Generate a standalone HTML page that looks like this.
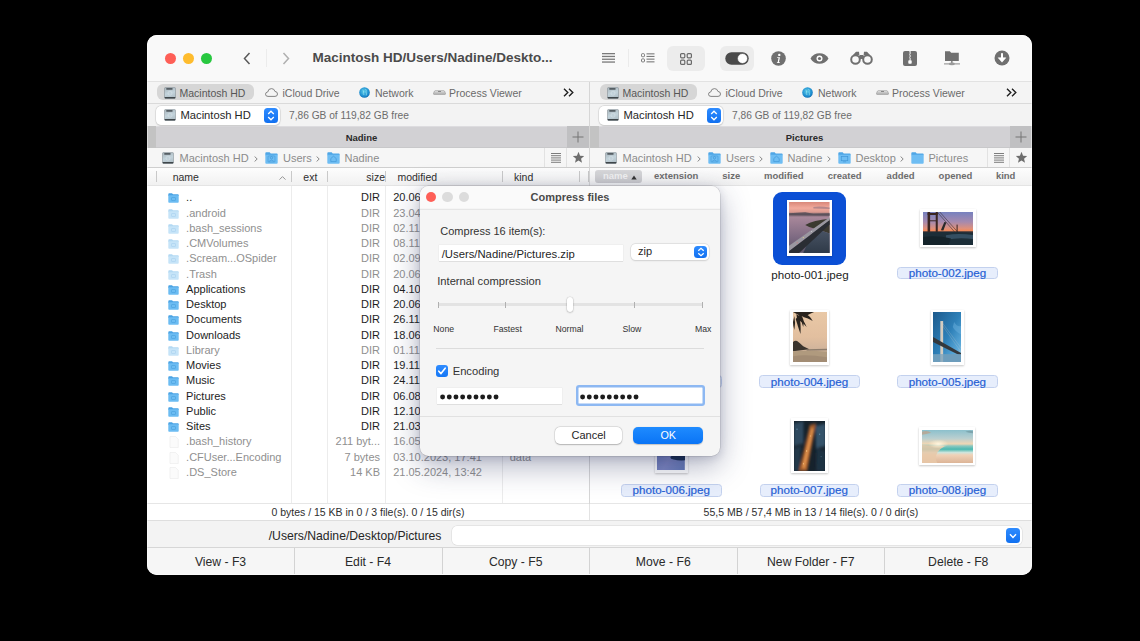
<!DOCTYPE html>
<html><head><meta charset="utf-8">
<style>
*{box-sizing:border-box;margin:0;padding:0}
html,body{width:1140px;height:641px;overflow:hidden;background:#000;font-family:"Liberation Sans",sans-serif;color:#222}
.a{position:absolute}
#win{position:absolute;left:147px;top:35px;width:885px;height:540px;border-radius:10px;background:#f9f9f9;overflow:hidden}
.t{position:absolute;white-space:nowrap;line-height:1}
.hl{position:absolute;height:1px;background:#dcdcdc}
.vl{position:absolute;width:1px;background:#e3e3e3}
</style></head><body>
<div id="win">


  <div class="a" style="left:0;top:0;width:885px;height:46px;background:#f9f9f9"></div>
  <div class="hl" style="left:0;top:46px;width:885px;background:#e2e2e2"></div>
  <div class="a" style="left:18px;top:17.7px;width:11px;height:11px;border-radius:50%;background:#fe5f57"></div>
  <div class="a" style="left:35.9px;top:17.7px;width:11px;height:11px;border-radius:50%;background:#febc2e"></div>
  <div class="a" style="left:53.9px;top:17.7px;width:11px;height:11px;border-radius:50%;background:#28c840"></div>
  <div class="a" style="left:0;top:47px;width:885px;height:22px;background:#f4f4f4"></div>
  <div class="hl" style="left:0;top:68px;width:885px;background:#dadada"></div>
  <div class="a" style="left:0;top:69px;width:885px;height:22px;background:#f3f3f3"></div>
  <div class="a" style="left:0;top:91px;width:885px;height:22px;background:#d2d1d4"></div>
  <div class="hl" style="left:0;top:91px;width:885px;background:#dddcdf"></div>
  <div class="hl" style="left:0;top:112px;width:885px;background:#c8c8ca"></div>
  <div class="a" style="left:0;top:113px;width:885px;height:19px;background:#f6f6f6"></div>
  <div class="hl" style="left:0;top:132px;width:885px;background:#cfcfcf"></div>
  <div class="a" style="left:0;top:133px;width:885px;height:17px;background:linear-gradient(#fdfdfd,#f1f1f1)"></div>
  <div class="hl" style="left:0;top:150px;width:885px;background:#e4e4e4"></div>
  <div class="a" style="left:0;top:151px;width:885px;height:317px;background:#fff"></div>
  <div class="hl" style="left:0;top:468px;width:885px;background:#e6e6e6"></div>
  <div class="a" style="left:0;top:469px;width:885px;height:16px;background:#fff"></div>
  <div class="hl" style="left:0;top:485px;width:885px;background:#dedede"></div>
  <div class="a" style="left:0;top:486px;width:885px;height:27px;background:#f3f3f3"></div>
  <div class="hl" style="left:0;top:512px;width:885px;background:#d6d6d6"></div>
  <div class="a" style="left:0;top:513px;width:885px;height:27px;background:#f6f6f6"></div>
  <div class="vl" style="left:442px;top:47px;height:438px;background:#d6d6d6"></div>

  <!-- nav -->
  <svg class="a" style="left:96px;top:17px" width="8" height="13" viewBox="0 0 8 13"><path d="M6.5 1 L1.5 6.5 L6.5 12" fill="none" stroke="#5a5a5a" stroke-width="1.5"/></svg>
  <div class="a" style="left:119px;top:14px;width:1px;height:18px;background:#ececec"></div>
  <svg class="a" style="left:135px;top:17px" width="8" height="13" viewBox="0 0 8 13"><path d="M1.5 1 L6.5 6.5 L1.5 12" fill="none" stroke="#b0b0b0" stroke-width="1.5"/></svg>
  <div class="t" style="left:165.5px;top:16px;font-size:13.5px;font-weight:bold;color:#4b4b4b">Macintosh HD/Users/Nadine/Deskto...</div>
  <!-- view icons -->
  <svg class="a" style="left:455px;top:18px" width="13" height="10" viewBox="0 0 13 10"><g fill="#7a7a7a"><rect x="0" y="0" width="13" height="1.3"/><rect x="0" y="2.8" width="13" height="1.3"/><rect x="0" y="5.6" width="13" height="1.3"/><rect x="0" y="8.4" width="13" height="1.3"/></g></svg>
  <div class="a" style="left:480.5px;top:14px;width:1px;height:18px;background:#ebebeb"></div>
  <svg class="a" style="left:494px;top:18px" width="14" height="10" viewBox="0 0 14 10"><g fill="none" stroke="#7a7a7a" stroke-width="1"><rect x="0.5" y="0.7" width="3" height="3" rx="0.8"/><rect x="0.5" y="5.9" width="3" height="3" rx="0.8"/></g><g fill="#7a7a7a"><rect x="5.5" y="0.3" width="8" height="1.1"/><rect x="5.5" y="2.9" width="8" height="1.1"/><rect x="5.5" y="5.6" width="8" height="1.1"/><rect x="5.5" y="8.3" width="8" height="1.1"/></g></svg>
  <div class="a" style="left:520px;top:11px;width:38px;height:25px;border-radius:6px;background:#ececec"></div>
  <svg class="a" style="left:533px;top:17.5px" width="12" height="12" viewBox="0 0 12 12"><g fill="none" stroke="#6a6a6a" stroke-width="1.2"><rect x="0.6" y="0.6" width="4.2" height="4.2" rx="1"/><rect x="7.2" y="0.6" width="4.2" height="4.2" rx="1"/><rect x="0.6" y="7.2" width="4.2" height="4.2" rx="1"/><rect x="7.2" y="7.2" width="4.2" height="4.2" rx="1"/></g></svg>
  <div class="a" style="left:573px;top:11px;width:34px;height:25px;border-radius:6px;background:#ececec"></div>
<svg class="a" style="left:578px;top:16.6px" width="24" height="13" viewBox="0 0 24 13"><rect x="0.3" y="0.3" width="23.4" height="12.4" rx="6.2" fill="#4a4a4a"/><circle cx="17.5" cy="6.5" r="5" fill="#fff" stroke="#4a4a4a" stroke-width="0.6"/></svg>
  <svg class="a" style="left:624px;top:16px" width="15" height="15" viewBox="0 0 15 15"><circle cx="7.5" cy="7.5" r="7.3" fill="#707070"/><circle cx="8.3" cy="3.9" r="1.2" fill="#fff"/><path d="M6.2 6.2 L9 6.2 L7.9 11.3 L9 11.3 L8.8 12 L5.8 12 L6 11.3 L6.7 11.3 L7.5 7 L6.1 7 Z" fill="#fff"/></svg>
  <!-- eye -->
  <svg class="a" style="left:663px;top:18px" width="19" height="11" viewBox="0 0 19 11"><path d="M0.5 5.5 C4 -1.5 15 -1.5 18.5 5.5 C15 12.5 4 12.5 0.5 5.5 Z" fill="#707070"/><circle cx="9.5" cy="5.5" r="3" fill="#fff"/><circle cx="9.5" cy="5.5" r="1.6" fill="#707070"/></svg>
  <!-- binoculars -->
  <svg class="a" style="left:702.5px;top:16px" width="23" height="14" viewBox="0 0 23 14"><g fill="none" stroke="#707070" stroke-width="2"><circle cx="5.5" cy="8.5" r="4.3"/><circle cx="17.5" cy="8.5" r="4.3"/></g><path d="M3 4 L6 0.8 L9 0.8 L9.5 5 L13.5 5 L14 0.8 L17 0.8 L20 4 Z" fill="#707070"/><rect x="9" y="5" width="5" height="3" fill="#707070"/></svg>
  <!-- zip -->
  <svg class="a" style="left:756px;top:15.5px" width="14" height="15" viewBox="0 0 14 15"><rect x="0" y="0" width="14" height="15" rx="2" fill="#707070"/><rect x="6.3" y="0" width="1.4" height="9.5" fill="#e8e8e8"/><g fill="#707070"><rect x="6.3" y="1.5" width="0.7" height="1"/><rect x="7" y="3" width="0.7" height="1"/><rect x="6.3" y="4.5" width="0.7" height="1"/><rect x="7" y="6" width="0.7" height="1"/><rect x="6.3" y="7.5" width="0.7" height="1"/></g><rect x="5.3" y="9.3" width="3.4" height="3.5" rx="0.8" fill="#fff"/></svg>
  <!-- network folder -->
  <svg class="a" style="left:796.5px;top:15px" width="16" height="17" viewBox="0 0 16 17"><path d="M1 1.3 L5.8 1.3 L7.2 2.8 L14.8 2.8 L14.8 10.9 L1 10.9 Z" fill="#707070"/><rect x="7.2" y="10.9" width="1.3" height="2.4" fill="#707070"/><rect x="0" y="13.4" width="16" height="1" fill="#8a8a8a"/><ellipse cx="7.9" cy="13.9" rx="3" ry="1.3" fill="#9a9a9a"/></svg>
  <!-- download -->
  <svg class="a" style="left:847px;top:15.3px" width="16" height="16" viewBox="0 0 16 16"><circle cx="8" cy="8" r="7.5" fill="#707070"/><rect x="7" y="3.2" width="2" height="5.5" fill="#fff"/><path d="M4.2 7.8 L11.8 7.8 L8 12.2 Z" fill="#fff" stroke="#fff" stroke-width="0.6" stroke-linejoin="round"/></svg>

<div class="a" style="left:10px;top:49px;width:97px;height:16px;background:#d6d6d6;border-radius:6px"></div>
<svg class="a" style="left:17px;top:51.5px" width="12" height="12" viewBox="0 0 12 12"><defs><linearGradient id="dg1" x1="0" y1="0" x2="0.3" y2="1"><stop offset="0" stop-color="#a9b6bd"/><stop offset="0.6" stop-color="#c3d3db"/><stop offset="1" stop-color="#b3c2ca"/></linearGradient></defs><path d="M1.3 0.6 H10.7 Q11.5 0.6 11.5 1.5 V10.2 Q11.5 11.4 10.3 11.4 H1.7 Q0.5 11.4 0.5 10.2 V1.5 Q0.5 0.6 1.3 0.6 Z" fill="url(#dg1)" stroke="#7d878c" stroke-width="0.5"/><rect x="2.3" y="1.1" width="6.2" height="1.6" fill="#4d555a"/><rect x="0.6" y="10" width="10.8" height="1.4" rx="0.6" fill="#3f464a"/><circle cx="6" cy="6.2" r="2" fill="none" stroke="#e3ecf0" stroke-width="0.5" opacity="0.8"/></svg>
<div class="t" style="left:32.5px;top:52.5px;font-size:10.5px;color:#565656;">Macintosh HD</div>
<svg class="a" style="left:118px;top:52.5px" width="13" height="9" viewBox="0 0 13 9"><path d="M3 8.4 Q0.5 8.4 0.5 6.2 Q0.5 4.2 2.7 4 Q3.2 0.6 6.5 0.6 Q9.3 0.6 9.9 3.4 Q12.5 3.6 12.5 6 Q12.5 8.4 10 8.4 Z" fill="none" stroke="#777" stroke-width="0.9"/></svg>
<div class="t" style="left:135.5px;top:52.5px;font-size:10.5px;color:#6a6a6a;">iCloud Drive</div>
<svg class="a" style="left:212px;top:51.5px" width="11" height="11" viewBox="0 0 11 11"><defs><radialGradient id="gl0" cx="0.45" cy="0.4" r="0.65"><stop offset="0" stop-color="#5ccbe8"/><stop offset="0.7" stop-color="#1d8ed0"/><stop offset="1" stop-color="#1366a8"/></radialGradient></defs><circle cx="5.5" cy="5.5" r="5.3" fill="url(#gl0)"/><path d="M3.5 3 Q5 3.5 4.5 5 Q3.8 6.5 5 8 M6.5 2 Q7.8 3.3 7 5 Q8 6.5 7.2 8.5" fill="none" stroke="#a8ecf5" stroke-width="0.9" opacity="0.6"/></svg>
<div class="t" style="left:228px;top:52.5px;font-size:10.5px;color:#6a6a6a;">Network</div>
<svg class="a" style="left:285.5px;top:54.5px" width="13" height="5" viewBox="0 0 13 5"><defs><linearGradient id="pv0" x1="0" y1="0" x2="0" y2="1"><stop offset="0" stop-color="#e4e4e4"/><stop offset="1" stop-color="#a8a8a8"/></linearGradient></defs><path d="M1.5 1 Q2 0.4 3 0.4 H10 Q11 0.4 11.5 1 L12.6 3.4 Q12.6 4.6 11.4 4.6 H1.6 Q0.4 4.6 0.4 3.4 Z" fill="url(#pv0)" stroke="#8c8c8c" stroke-width="0.5"/><rect x="5" y="1.2" width="3" height="0.6" fill="#555"/></svg>
<div class="t" style="left:302px;top:52.5px;font-size:10.5px;color:#6a6a6a;">Process Viewer</div>
<svg class="a" style="left:415.7px;top:53px" width="11" height="9" viewBox="0 0 11 9"><path d="M1 0.8 L4.8 4.5 L1 8.2 M6 0.8 L9.8 4.5 L6 8.2" fill="none" stroke="#222" stroke-width="1.4"/></svg>
<div class="a" style="left:9px;top:71px;width:124px;height:18.5px;background:#fff;border-radius:5px;box-shadow:0 0 0 0.5px #d0d0d0,0 0.5px 1.5px rgba(0,0,0,0.18)"></div>
<svg class="a" style="left:17px;top:74px" width="12" height="12" viewBox="0 0 12 12"><defs><linearGradient id="dg2" x1="0" y1="0" x2="0.3" y2="1"><stop offset="0" stop-color="#a9b6bd"/><stop offset="0.6" stop-color="#c3d3db"/><stop offset="1" stop-color="#b3c2ca"/></linearGradient></defs><path d="M1.3 0.6 H10.7 Q11.5 0.6 11.5 1.5 V10.2 Q11.5 11.4 10.3 11.4 H1.7 Q0.5 11.4 0.5 10.2 V1.5 Q0.5 0.6 1.3 0.6 Z" fill="url(#dg2)" stroke="#7d878c" stroke-width="0.5"/><rect x="2.3" y="1.1" width="6.2" height="1.6" fill="#4d555a"/><rect x="0.6" y="10" width="10.8" height="1.4" rx="0.6" fill="#3f464a"/><circle cx="6" cy="6.2" r="2" fill="none" stroke="#e3ecf0" stroke-width="0.5" opacity="0.8"/></svg>
<div class="t" style="left:33.5px;top:75px;font-size:11.2px;color:#262626;">Macintosh HD</div>
<div class="a" style="left:117px;top:73px;width:14px;height:14.5px;border-radius:3.5px;background:linear-gradient(#2f8cff,#1170f0)"></div>
<svg class="a" style="left:120px;top:75px" width="8" height="11" viewBox="0 0 8 11"><path d="M1.2 4 L4 1.2 L6.8 4 M1.2 7 L4 9.8 L6.8 7" fill="none" stroke="#fff" stroke-width="1.3"/></svg>
<div class="t" style="left:142px;top:75.5px;font-size:10.2px;color:#6c6c6c;">7,86 GB of 119,82 GB free</div>
<div class="a" style="left:0px;top:91px;width:9px;height:22px;background:#c3c3c3;"></div>
<div class="a" style="left:419.5px;top:91px;width:22.5px;height:22px;background:#c0c0c2;"></div>
<svg class="a" style="left:425px;top:96px" width="12" height="12" viewBox="0 0 12 12"><path d="M6 0.5 V11.5 M0.5 6 H11.5" stroke="#747474" stroke-width="1"/></svg>
<div class="t" style="left:9px;width:411px;text-align:center;top:97.5px;font-size:9.5px;font-weight:bold;color:#2a2a2a">Nadine</div>
<div class="a" style="left:396.6px;top:113px;width:1px;height:19px;background:#e2e2e2;"></div>
<div class="a" style="left:419.3px;top:113px;width:1px;height:19px;background:#e2e2e2;"></div>
<svg class="a" style="left:404px;top:117.5px" width="10" height="10" viewBox="0 0 10 10"><g fill="#7c7c7c"><rect y="0" width="10" height="1"/><rect y="2.2" width="10" height="1"/><rect y="4.4" width="10" height="1"/><rect y="6.6" width="10" height="1"/><rect y="8.8" width="10" height="1"/></g></svg>
<svg class="a" style="left:424.5px;top:116px" width="13" height="13" viewBox="0 0 24 24"><path d="M12 1.5 L14.9 8.6 L22.5 9.2 L16.7 14.1 L18.5 21.6 L12 17.6 L5.5 21.6 L7.3 14.1 L1.5 9.2 L9.1 8.6 Z" fill="#6e6e6e"/></svg>
<svg class="a" style="left:15px;top:116.5px" width="12" height="12" viewBox="0 0 12 12"><defs><linearGradient id="dg3" x1="0" y1="0" x2="0.3" y2="1"><stop offset="0" stop-color="#a9b6bd"/><stop offset="0.6" stop-color="#c3d3db"/><stop offset="1" stop-color="#b3c2ca"/></linearGradient></defs><path d="M1.3 0.6 H10.7 Q11.5 0.6 11.5 1.5 V10.2 Q11.5 11.4 10.3 11.4 H1.7 Q0.5 11.4 0.5 10.2 V1.5 Q0.5 0.6 1.3 0.6 Z" fill="url(#dg3)" stroke="#7d878c" stroke-width="0.5"/><rect x="2.3" y="1.1" width="6.2" height="1.6" fill="#4d555a"/><rect x="0.6" y="10" width="10.8" height="1.4" rx="0.6" fill="#3f464a"/><circle cx="6" cy="6.2" r="2" fill="none" stroke="#e3ecf0" stroke-width="0.5" opacity="0.8"/></svg>
<div class="t" style="left:32.5px;top:117.5px;font-size:11px;color:#8b8b8b;">Macintosh HD</div>
<svg class="a" style="left:107.0px;top:121px" width="4" height="6" viewBox="0 0 4 6"><path d="M0.6 0.5 L3.2 3 L0.6 5.5" fill="none" stroke="#7a7a7a" stroke-width="0.9"/></svg>
<svg class="a" style="left:118.0px;top:117px" width="13" height="12" viewBox="0 0 12 11"><path d="M0.3 1.2 Q0.3 0.3 1.2 0.3 L4.3 0.3 L5.3 1.3 L10.8 1.3 Q11.7 1.3 11.7 2.2 L11.7 3 L0.3 3 Z" fill="#4fa6e6"/><rect x="0.3" y="2.4" width="11.4" height="8.3" rx="0.9" fill="#6ebdf3"/><circle cx="6" cy="5.3" r="1.1" fill="none" stroke="#3f95d6" stroke-width="0.6"/><path d="M3.8 8.6 Q6 6.3 8.2 8.6" fill="none" stroke="#3f95d6" stroke-width="0.6"/><rect x="2.8" y="3.6" width="6.4" height="5.6" rx="0.8" fill="none" stroke="#3f95d6" stroke-width="0.5"/></svg>
<div class="t" style="left:136.0px;top:117.5px;font-size:11px;color:#8b8b8b;">Users</div>
<svg class="a" style="left:168.5px;top:121px" width="4" height="6" viewBox="0 0 4 6"><path d="M0.6 0.5 L3.2 3 L0.6 5.5" fill="none" stroke="#7a7a7a" stroke-width="0.9"/></svg>
<svg class="a" style="left:179.5px;top:117px" width="13" height="12" viewBox="0 0 12 11"><path d="M0.3 1.2 Q0.3 0.3 1.2 0.3 L4.3 0.3 L5.3 1.3 L10.8 1.3 Q11.7 1.3 11.7 2.2 L11.7 3 L0.3 3 Z" fill="#4fa6e6"/><rect x="0.3" y="2.4" width="11.4" height="8.3" rx="0.9" fill="#6ebdf3"/><path d="M3.5 6 L6 3.8 L8.5 6 V8.8 H3.5 Z" fill="none" stroke="#3f95d6" stroke-width="0.6"/></svg>
<div class="t" style="left:197.5px;top:117.5px;font-size:11px;color:#8b8b8b;">Nadine</div>
<div class="a" style="left:453px;top:49px;width:97px;height:16px;background:#d6d6d6;border-radius:6px"></div>
<svg class="a" style="left:460px;top:51.5px" width="12" height="12" viewBox="0 0 12 12"><defs><linearGradient id="dg4" x1="0" y1="0" x2="0.3" y2="1"><stop offset="0" stop-color="#a9b6bd"/><stop offset="0.6" stop-color="#c3d3db"/><stop offset="1" stop-color="#b3c2ca"/></linearGradient></defs><path d="M1.3 0.6 H10.7 Q11.5 0.6 11.5 1.5 V10.2 Q11.5 11.4 10.3 11.4 H1.7 Q0.5 11.4 0.5 10.2 V1.5 Q0.5 0.6 1.3 0.6 Z" fill="url(#dg4)" stroke="#7d878c" stroke-width="0.5"/><rect x="2.3" y="1.1" width="6.2" height="1.6" fill="#4d555a"/><rect x="0.6" y="10" width="10.8" height="1.4" rx="0.6" fill="#3f464a"/><circle cx="6" cy="6.2" r="2" fill="none" stroke="#e3ecf0" stroke-width="0.5" opacity="0.8"/></svg>
<div class="t" style="left:475.5px;top:52.5px;font-size:10.5px;color:#565656;">Macintosh HD</div>
<svg class="a" style="left:561px;top:52.5px" width="13" height="9" viewBox="0 0 13 9"><path d="M3 8.4 Q0.5 8.4 0.5 6.2 Q0.5 4.2 2.7 4 Q3.2 0.6 6.5 0.6 Q9.3 0.6 9.9 3.4 Q12.5 3.6 12.5 6 Q12.5 8.4 10 8.4 Z" fill="none" stroke="#777" stroke-width="0.9"/></svg>
<div class="t" style="left:578.5px;top:52.5px;font-size:10.5px;color:#6a6a6a;">iCloud Drive</div>
<svg class="a" style="left:655px;top:51.5px" width="11" height="11" viewBox="0 0 11 11"><defs><radialGradient id="gl443" cx="0.45" cy="0.4" r="0.65"><stop offset="0" stop-color="#5ccbe8"/><stop offset="0.7" stop-color="#1d8ed0"/><stop offset="1" stop-color="#1366a8"/></radialGradient></defs><circle cx="5.5" cy="5.5" r="5.3" fill="url(#gl443)"/><path d="M3.5 3 Q5 3.5 4.5 5 Q3.8 6.5 5 8 M6.5 2 Q7.8 3.3 7 5 Q8 6.5 7.2 8.5" fill="none" stroke="#a8ecf5" stroke-width="0.9" opacity="0.6"/></svg>
<div class="t" style="left:671px;top:52.5px;font-size:10.5px;color:#6a6a6a;">Network</div>
<svg class="a" style="left:728.5px;top:54.5px" width="13" height="5" viewBox="0 0 13 5"><defs><linearGradient id="pv443" x1="0" y1="0" x2="0" y2="1"><stop offset="0" stop-color="#e4e4e4"/><stop offset="1" stop-color="#a8a8a8"/></linearGradient></defs><path d="M1.5 1 Q2 0.4 3 0.4 H10 Q11 0.4 11.5 1 L12.6 3.4 Q12.6 4.6 11.4 4.6 H1.6 Q0.4 4.6 0.4 3.4 Z" fill="url(#pv443)" stroke="#8c8c8c" stroke-width="0.5"/><rect x="5" y="1.2" width="3" height="0.6" fill="#555"/></svg>
<div class="t" style="left:745px;top:52.5px;font-size:10.5px;color:#6a6a6a;">Process Viewer</div>
<svg class="a" style="left:858.7px;top:53px" width="11" height="9" viewBox="0 0 11 9"><path d="M1 0.8 L4.8 4.5 L1 8.2 M6 0.8 L9.8 4.5 L6 8.2" fill="none" stroke="#222" stroke-width="1.4"/></svg>
<div class="a" style="left:452px;top:71px;width:124px;height:18.5px;background:#fff;border-radius:5px;box-shadow:0 0 0 0.5px #d0d0d0,0 0.5px 1.5px rgba(0,0,0,0.18)"></div>
<svg class="a" style="left:460px;top:74px" width="12" height="12" viewBox="0 0 12 12"><defs><linearGradient id="dg5" x1="0" y1="0" x2="0.3" y2="1"><stop offset="0" stop-color="#a9b6bd"/><stop offset="0.6" stop-color="#c3d3db"/><stop offset="1" stop-color="#b3c2ca"/></linearGradient></defs><path d="M1.3 0.6 H10.7 Q11.5 0.6 11.5 1.5 V10.2 Q11.5 11.4 10.3 11.4 H1.7 Q0.5 11.4 0.5 10.2 V1.5 Q0.5 0.6 1.3 0.6 Z" fill="url(#dg5)" stroke="#7d878c" stroke-width="0.5"/><rect x="2.3" y="1.1" width="6.2" height="1.6" fill="#4d555a"/><rect x="0.6" y="10" width="10.8" height="1.4" rx="0.6" fill="#3f464a"/><circle cx="6" cy="6.2" r="2" fill="none" stroke="#e3ecf0" stroke-width="0.5" opacity="0.8"/></svg>
<div class="t" style="left:476.5px;top:75px;font-size:11.2px;color:#262626;">Macintosh HD</div>
<div class="a" style="left:560px;top:73px;width:14px;height:14.5px;border-radius:3.5px;background:linear-gradient(#2f8cff,#1170f0)"></div>
<svg class="a" style="left:563px;top:75px" width="8" height="11" viewBox="0 0 8 11"><path d="M1.2 4 L4 1.2 L6.8 4 M1.2 7 L4 9.8 L6.8 7" fill="none" stroke="#fff" stroke-width="1.3"/></svg>
<div class="t" style="left:585px;top:75.5px;font-size:10.2px;color:#6c6c6c;">7,86 GB of 119,82 GB free</div>
<div class="a" style="left:443px;top:91px;width:9px;height:22px;background:#c3c3c3;"></div>
<div class="a" style="left:862.5px;top:91px;width:22.5px;height:22px;background:#c0c0c2;"></div>
<svg class="a" style="left:868px;top:96px" width="12" height="12" viewBox="0 0 12 12"><path d="M6 0.5 V11.5 M0.5 6 H11.5" stroke="#747474" stroke-width="1"/></svg>
<div class="t" style="left:452px;width:411px;text-align:center;top:97.5px;font-size:9.5px;font-weight:bold;color:#2a2a2a">Pictures</div>
<div class="a" style="left:839.6px;top:113px;width:1px;height:19px;background:#e2e2e2;"></div>
<div class="a" style="left:862.3px;top:113px;width:1px;height:19px;background:#e2e2e2;"></div>
<svg class="a" style="left:847px;top:117.5px" width="10" height="10" viewBox="0 0 10 10"><g fill="#7c7c7c"><rect y="0" width="10" height="1"/><rect y="2.2" width="10" height="1"/><rect y="4.4" width="10" height="1"/><rect y="6.6" width="10" height="1"/><rect y="8.8" width="10" height="1"/></g></svg>
<svg class="a" style="left:867.5px;top:116px" width="13" height="13" viewBox="0 0 24 24"><path d="M12 1.5 L14.9 8.6 L22.5 9.2 L16.7 14.1 L18.5 21.6 L12 17.6 L5.5 21.6 L7.3 14.1 L1.5 9.2 L9.1 8.6 Z" fill="#6e6e6e"/></svg>
<svg class="a" style="left:458px;top:116.5px" width="12" height="12" viewBox="0 0 12 12"><defs><linearGradient id="dg6" x1="0" y1="0" x2="0.3" y2="1"><stop offset="0" stop-color="#a9b6bd"/><stop offset="0.6" stop-color="#c3d3db"/><stop offset="1" stop-color="#b3c2ca"/></linearGradient></defs><path d="M1.3 0.6 H10.7 Q11.5 0.6 11.5 1.5 V10.2 Q11.5 11.4 10.3 11.4 H1.7 Q0.5 11.4 0.5 10.2 V1.5 Q0.5 0.6 1.3 0.6 Z" fill="url(#dg6)" stroke="#7d878c" stroke-width="0.5"/><rect x="2.3" y="1.1" width="6.2" height="1.6" fill="#4d555a"/><rect x="0.6" y="10" width="10.8" height="1.4" rx="0.6" fill="#3f464a"/><circle cx="6" cy="6.2" r="2" fill="none" stroke="#e3ecf0" stroke-width="0.5" opacity="0.8"/></svg>
<div class="t" style="left:475.5px;top:117.5px;font-size:11px;color:#8b8b8b;">Macintosh HD</div>
<svg class="a" style="left:550.0px;top:121px" width="4" height="6" viewBox="0 0 4 6"><path d="M0.6 0.5 L3.2 3 L0.6 5.5" fill="none" stroke="#7a7a7a" stroke-width="0.9"/></svg>
<svg class="a" style="left:561.0px;top:117px" width="13" height="12" viewBox="0 0 12 11"><path d="M0.3 1.2 Q0.3 0.3 1.2 0.3 L4.3 0.3 L5.3 1.3 L10.8 1.3 Q11.7 1.3 11.7 2.2 L11.7 3 L0.3 3 Z" fill="#4fa6e6"/><rect x="0.3" y="2.4" width="11.4" height="8.3" rx="0.9" fill="#6ebdf3"/><circle cx="6" cy="5.3" r="1.1" fill="none" stroke="#3f95d6" stroke-width="0.6"/><path d="M3.8 8.6 Q6 6.3 8.2 8.6" fill="none" stroke="#3f95d6" stroke-width="0.6"/><rect x="2.8" y="3.6" width="6.4" height="5.6" rx="0.8" fill="none" stroke="#3f95d6" stroke-width="0.5"/></svg>
<div class="t" style="left:579.0px;top:117.5px;font-size:11px;color:#8b8b8b;">Users</div>
<svg class="a" style="left:611.5px;top:121px" width="4" height="6" viewBox="0 0 4 6"><path d="M0.6 0.5 L3.2 3 L0.6 5.5" fill="none" stroke="#7a7a7a" stroke-width="0.9"/></svg>
<svg class="a" style="left:622.5px;top:117px" width="13" height="12" viewBox="0 0 12 11"><path d="M0.3 1.2 Q0.3 0.3 1.2 0.3 L4.3 0.3 L5.3 1.3 L10.8 1.3 Q11.7 1.3 11.7 2.2 L11.7 3 L0.3 3 Z" fill="#4fa6e6"/><rect x="0.3" y="2.4" width="11.4" height="8.3" rx="0.9" fill="#6ebdf3"/><path d="M3.5 6 L6 3.8 L8.5 6 V8.8 H3.5 Z" fill="none" stroke="#3f95d6" stroke-width="0.6"/></svg>
<div class="t" style="left:640.5px;top:117.5px;font-size:11px;color:#8b8b8b;">Nadine</div>
<svg class="a" style="left:679.5px;top:121px" width="4" height="6" viewBox="0 0 4 6"><path d="M0.6 0.5 L3.2 3 L0.6 5.5" fill="none" stroke="#7a7a7a" stroke-width="0.9"/></svg>
<svg class="a" style="left:690.5px;top:117px" width="13" height="12" viewBox="0 0 12 11"><path d="M0.3 1.2 Q0.3 0.3 1.2 0.3 L4.3 0.3 L5.3 1.3 L10.8 1.3 Q11.7 1.3 11.7 2.2 L11.7 3 L0.3 3 Z" fill="#4fa6e6"/><rect x="0.3" y="2.4" width="11.4" height="8.3" rx="0.9" fill="#6ebdf3"/><rect x="3" y="4" width="6" height="4" fill="none" stroke="#3f95d6" stroke-width="0.6"/><path d="M4.5 9 H7.5" stroke="#3f95d6" stroke-width="0.6"/></svg>
<div class="t" style="left:708.5px;top:117.5px;font-size:11px;color:#8b8b8b;">Desktop</div>
<svg class="a" style="left:752.5px;top:121px" width="4" height="6" viewBox="0 0 4 6"><path d="M0.6 0.5 L3.2 3 L0.6 5.5" fill="none" stroke="#7a7a7a" stroke-width="0.9"/></svg>
<svg class="a" style="left:763.5px;top:117px" width="13" height="12" viewBox="0 0 12 11"><path d="M0.3 1.2 Q0.3 0.3 1.2 0.3 L4.3 0.3 L5.3 1.3 L10.8 1.3 Q11.7 1.3 11.7 2.2 L11.7 3 L0.3 3 Z" fill="#4fa6e6"/><rect x="0.3" y="2.4" width="11.4" height="8.3" rx="0.9" fill="#6ebdf3"/></svg>
<div class="t" style="left:781.5px;top:117.5px;font-size:11px;color:#8b8b8b;">Pictures</div>
<div class="a" style="left:8.6px;top:135.5px;width:1px;height:11.5px;background:#c9c9c9;"></div>
<div class="a" style="left:143.8px;top:135.5px;width:1px;height:11.5px;background:#c9c9c9;"></div>
<div class="a" style="left:179.6px;top:135.5px;width:1px;height:11.5px;background:#c9c9c9;"></div>
<div class="a" style="left:238.2px;top:135.5px;width:1px;height:11.5px;background:#c9c9c9;"></div>
<div class="a" style="left:355.3px;top:135.5px;width:1px;height:11.5px;background:#c9c9c9;"></div>
<div class="a" style="left:432.0px;top:135.5px;width:1px;height:11.5px;background:#c9c9c9;"></div>
<div class="t" style="left:25.7px;top:136.7px;font-size:10.5px;color:#2e2e2e;">name</div>
<svg class="a" style="left:131.5px;top:140.5px" width="7" height="4" viewBox="0 0 7 4"><path d="M0.5 3.6 L3.5 0.6 L6.5 3.6" fill="none" stroke="#8a8a8a" stroke-width="0.9"/></svg>
<div class="t" style="left:156.3px;top:136.7px;font-size:10.5px;color:#2e2e2e;">ext</div>
<div class="t" style="left:180px;top:136.7px;font-size:10.5px;color:#2e2e2e;width:58px;text-align:right">size</div>
<div class="t" style="left:250.4px;top:136.7px;font-size:10.5px;color:#2e2e2e;">modified</div>
<div class="t" style="left:367px;top:136.7px;font-size:10.5px;color:#2e2e2e;">kind</div>
<div class="a" style="left:143.8px;top:151px;width:1px;height:317px;background:#ececec;"></div>
<div class="a" style="left:179.8px;top:151px;width:1px;height:317px;background:#ececec;"></div>
<div class="a" style="left:238.3px;top:151px;width:1px;height:317px;background:#ececec;"></div>
<div class="a" style="left:354.8px;top:151px;width:1px;height:317px;background:#ececec;"></div>
<svg class="a" style="left:21.3px;top:158.4px" width="11" height="10" viewBox="0 0 11 10"><path d="M0.3 1.2 Q0.3 0.3 1.2 0.3 L4 0.3 L5 1.2 L9.9 1.2 Q10.7 1.2 10.7 2 L10.7 3 L0.3 3 Z" fill="#4aa3e4"/><rect x="0.3" y="2.2" width="10.4" height="7.5" rx="0.8" fill="#6cbcf2"/><rect x="3.5" y="4.5" width="4" height="3" rx="0.5" fill="none" stroke="#4a9fdc" stroke-width="0.6"/></svg>
<div class="t" style="left:39.1px;top:157.4px;font-size:11px;color:#1d1d1d;">..</div>
<div class="t" style="left:140px;top:157.4px;font-size:11px;color:#1d1d1d;width:93px;text-align:right">DIR</div>
<div class="t" style="left:246.2px;top:157.4px;font-size:11px;color:#1d1d1d;">20.06.2023, 10:14</div>
<svg class="a" style="left:21.3px;top:173.65px" width="11" height="10" viewBox="0 0 11 10"><path d="M0.3 1.2 Q0.3 0.3 1.2 0.3 L4 0.3 L5 1.2 L9.9 1.2 Q10.7 1.2 10.7 2 L10.7 3 L0.3 3 Z" fill="#b3d9f3"/><rect x="0.3" y="2.2" width="10.4" height="7.5" rx="0.8" fill="#c6e4f8"/><rect x="3.5" y="4.5" width="4" height="3" rx="0.5" fill="none" stroke="#a8d0ee" stroke-width="0.6"/></svg>
<div class="t" style="left:39.1px;top:172.65px;font-size:11px;color:#8f8f8f;">.android</div>
<div class="t" style="left:140px;top:172.65px;font-size:11px;color:#8f8f8f;width:93px;text-align:right">DIR</div>
<div class="t" style="left:246.2px;top:172.65px;font-size:11px;color:#8f8f8f;">23.04.2023, 12:10</div>
<svg class="a" style="left:21.3px;top:188.9px" width="11" height="10" viewBox="0 0 11 10"><path d="M0.3 1.2 Q0.3 0.3 1.2 0.3 L4 0.3 L5 1.2 L9.9 1.2 Q10.7 1.2 10.7 2 L10.7 3 L0.3 3 Z" fill="#b3d9f3"/><rect x="0.3" y="2.2" width="10.4" height="7.5" rx="0.8" fill="#c6e4f8"/><rect x="3.5" y="4.5" width="4" height="3" rx="0.5" fill="none" stroke="#a8d0ee" stroke-width="0.6"/></svg>
<div class="t" style="left:39.1px;top:187.9px;font-size:11px;color:#8f8f8f;">.bash_sessions</div>
<div class="t" style="left:140px;top:187.9px;font-size:11px;color:#8f8f8f;width:93px;text-align:right">DIR</div>
<div class="t" style="left:246.2px;top:187.9px;font-size:11px;color:#8f8f8f;">02.11.2023, 09:33</div>
<svg class="a" style="left:21.3px;top:204.15px" width="11" height="10" viewBox="0 0 11 10"><path d="M0.3 1.2 Q0.3 0.3 1.2 0.3 L4 0.3 L5 1.2 L9.9 1.2 Q10.7 1.2 10.7 2 L10.7 3 L0.3 3 Z" fill="#b3d9f3"/><rect x="0.3" y="2.2" width="10.4" height="7.5" rx="0.8" fill="#c6e4f8"/><rect x="3.5" y="4.5" width="4" height="3" rx="0.5" fill="none" stroke="#a8d0ee" stroke-width="0.6"/></svg>
<div class="t" style="left:39.1px;top:203.15px;font-size:11px;color:#8f8f8f;">.CMVolumes</div>
<div class="t" style="left:140px;top:203.15px;font-size:11px;color:#8f8f8f;width:93px;text-align:right">DIR</div>
<div class="t" style="left:246.2px;top:203.15px;font-size:11px;color:#8f8f8f;">08.11.2023, 14:22</div>
<svg class="a" style="left:21.3px;top:219.4px" width="11" height="10" viewBox="0 0 11 10"><path d="M0.3 1.2 Q0.3 0.3 1.2 0.3 L4 0.3 L5 1.2 L9.9 1.2 Q10.7 1.2 10.7 2 L10.7 3 L0.3 3 Z" fill="#b3d9f3"/><rect x="0.3" y="2.2" width="10.4" height="7.5" rx="0.8" fill="#c6e4f8"/><rect x="3.5" y="4.5" width="4" height="3" rx="0.5" fill="none" stroke="#a8d0ee" stroke-width="0.6"/></svg>
<div class="t" style="left:39.1px;top:218.4px;font-size:11px;color:#8f8f8f;">.Scream...OSpider</div>
<div class="t" style="left:140px;top:218.4px;font-size:11px;color:#8f8f8f;width:93px;text-align:right">DIR</div>
<div class="t" style="left:246.2px;top:218.4px;font-size:11px;color:#8f8f8f;">02.09.2023, 18:05</div>
<svg class="a" style="left:21.3px;top:234.65px" width="11" height="10" viewBox="0 0 11 10"><path d="M0.3 1.2 Q0.3 0.3 1.2 0.3 L4 0.3 L5 1.2 L9.9 1.2 Q10.7 1.2 10.7 2 L10.7 3 L0.3 3 Z" fill="#b3d9f3"/><rect x="0.3" y="2.2" width="10.4" height="7.5" rx="0.8" fill="#c6e4f8"/><rect x="3.5" y="4.5" width="4" height="3" rx="0.5" fill="none" stroke="#a8d0ee" stroke-width="0.6"/></svg>
<div class="t" style="left:39.1px;top:233.65px;font-size:11px;color:#8f8f8f;">.Trash</div>
<div class="t" style="left:140px;top:233.65px;font-size:11px;color:#8f8f8f;width:93px;text-align:right">DIR</div>
<div class="t" style="left:246.2px;top:233.65px;font-size:11px;color:#8f8f8f;">20.06.2024, 11:40</div>
<svg class="a" style="left:21.3px;top:249.9px" width="11" height="10" viewBox="0 0 11 10"><path d="M0.3 1.2 Q0.3 0.3 1.2 0.3 L4 0.3 L5 1.2 L9.9 1.2 Q10.7 1.2 10.7 2 L10.7 3 L0.3 3 Z" fill="#4aa3e4"/><rect x="0.3" y="2.2" width="10.4" height="7.5" rx="0.8" fill="#6cbcf2"/><rect x="3.5" y="4.5" width="4" height="3" rx="0.5" fill="none" stroke="#4a9fdc" stroke-width="0.6"/></svg>
<div class="t" style="left:39.1px;top:248.9px;font-size:11px;color:#1d1d1d;">Applications</div>
<div class="t" style="left:140px;top:248.9px;font-size:11px;color:#1d1d1d;width:93px;text-align:right">DIR</div>
<div class="t" style="left:246.2px;top:248.9px;font-size:11px;color:#1d1d1d;">04.10.2023, 16:51</div>
<svg class="a" style="left:21.3px;top:265.15px" width="11" height="10" viewBox="0 0 11 10"><path d="M0.3 1.2 Q0.3 0.3 1.2 0.3 L4 0.3 L5 1.2 L9.9 1.2 Q10.7 1.2 10.7 2 L10.7 3 L0.3 3 Z" fill="#4aa3e4"/><rect x="0.3" y="2.2" width="10.4" height="7.5" rx="0.8" fill="#6cbcf2"/><rect x="3.5" y="4.5" width="4" height="3" rx="0.5" fill="none" stroke="#4a9fdc" stroke-width="0.6"/></svg>
<div class="t" style="left:39.1px;top:264.15px;font-size:11px;color:#1d1d1d;">Desktop</div>
<div class="t" style="left:140px;top:264.15px;font-size:11px;color:#1d1d1d;width:93px;text-align:right">DIR</div>
<div class="t" style="left:246.2px;top:264.15px;font-size:11px;color:#1d1d1d;">20.06.2024, 11:02</div>
<svg class="a" style="left:21.3px;top:280.4px" width="11" height="10" viewBox="0 0 11 10"><path d="M0.3 1.2 Q0.3 0.3 1.2 0.3 L4 0.3 L5 1.2 L9.9 1.2 Q10.7 1.2 10.7 2 L10.7 3 L0.3 3 Z" fill="#4aa3e4"/><rect x="0.3" y="2.2" width="10.4" height="7.5" rx="0.8" fill="#6cbcf2"/><rect x="3.5" y="4.5" width="4" height="3" rx="0.5" fill="none" stroke="#4a9fdc" stroke-width="0.6"/></svg>
<div class="t" style="left:39.1px;top:279.4px;font-size:11px;color:#1d1d1d;">Documents</div>
<div class="t" style="left:140px;top:279.4px;font-size:11px;color:#1d1d1d;width:93px;text-align:right">DIR</div>
<div class="t" style="left:246.2px;top:279.4px;font-size:11px;color:#1d1d1d;">26.11.2023, 10:18</div>
<svg class="a" style="left:21.3px;top:295.65px" width="11" height="10" viewBox="0 0 11 10"><path d="M0.3 1.2 Q0.3 0.3 1.2 0.3 L4 0.3 L5 1.2 L9.9 1.2 Q10.7 1.2 10.7 2 L10.7 3 L0.3 3 Z" fill="#4aa3e4"/><rect x="0.3" y="2.2" width="10.4" height="7.5" rx="0.8" fill="#6cbcf2"/><rect x="3.5" y="4.5" width="4" height="3" rx="0.5" fill="none" stroke="#4a9fdc" stroke-width="0.6"/></svg>
<div class="t" style="left:39.1px;top:294.65px;font-size:11px;color:#1d1d1d;">Downloads</div>
<div class="t" style="left:140px;top:294.65px;font-size:11px;color:#1d1d1d;width:93px;text-align:right">DIR</div>
<div class="t" style="left:246.2px;top:294.65px;font-size:11px;color:#1d1d1d;">18.06.2024, 13:27</div>
<svg class="a" style="left:21.3px;top:310.9px" width="11" height="10" viewBox="0 0 11 10"><path d="M0.3 1.2 Q0.3 0.3 1.2 0.3 L4 0.3 L5 1.2 L9.9 1.2 Q10.7 1.2 10.7 2 L10.7 3 L0.3 3 Z" fill="#b3d9f3"/><rect x="0.3" y="2.2" width="10.4" height="7.5" rx="0.8" fill="#c6e4f8"/><rect x="3.5" y="4.5" width="4" height="3" rx="0.5" fill="none" stroke="#a8d0ee" stroke-width="0.6"/></svg>
<div class="t" style="left:39.1px;top:309.9px;font-size:11px;color:#8f8f8f;">Library</div>
<div class="t" style="left:140px;top:309.9px;font-size:11px;color:#8f8f8f;width:93px;text-align:right">DIR</div>
<div class="t" style="left:246.2px;top:309.9px;font-size:11px;color:#8f8f8f;">01.11.2023, 08:45</div>
<svg class="a" style="left:21.3px;top:326.15px" width="11" height="10" viewBox="0 0 11 10"><path d="M0.3 1.2 Q0.3 0.3 1.2 0.3 L4 0.3 L5 1.2 L9.9 1.2 Q10.7 1.2 10.7 2 L10.7 3 L0.3 3 Z" fill="#4aa3e4"/><rect x="0.3" y="2.2" width="10.4" height="7.5" rx="0.8" fill="#6cbcf2"/><rect x="3.5" y="4.5" width="4" height="3" rx="0.5" fill="none" stroke="#4a9fdc" stroke-width="0.6"/></svg>
<div class="t" style="left:39.1px;top:325.15px;font-size:11px;color:#1d1d1d;">Movies</div>
<div class="t" style="left:140px;top:325.15px;font-size:11px;color:#1d1d1d;width:93px;text-align:right">DIR</div>
<div class="t" style="left:246.2px;top:325.15px;font-size:11px;color:#1d1d1d;">19.11.2023, 19:30</div>
<svg class="a" style="left:21.3px;top:341.4px" width="11" height="10" viewBox="0 0 11 10"><path d="M0.3 1.2 Q0.3 0.3 1.2 0.3 L4 0.3 L5 1.2 L9.9 1.2 Q10.7 1.2 10.7 2 L10.7 3 L0.3 3 Z" fill="#4aa3e4"/><rect x="0.3" y="2.2" width="10.4" height="7.5" rx="0.8" fill="#6cbcf2"/><rect x="3.5" y="4.5" width="4" height="3" rx="0.5" fill="none" stroke="#4a9fdc" stroke-width="0.6"/></svg>
<div class="t" style="left:39.1px;top:340.4px;font-size:11px;color:#1d1d1d;">Music</div>
<div class="t" style="left:140px;top:340.4px;font-size:11px;color:#1d1d1d;width:93px;text-align:right">DIR</div>
<div class="t" style="left:246.2px;top:340.4px;font-size:11px;color:#1d1d1d;">24.11.2023, 20:11</div>
<svg class="a" style="left:21.3px;top:356.65px" width="11" height="10" viewBox="0 0 11 10"><path d="M0.3 1.2 Q0.3 0.3 1.2 0.3 L4 0.3 L5 1.2 L9.9 1.2 Q10.7 1.2 10.7 2 L10.7 3 L0.3 3 Z" fill="#4aa3e4"/><rect x="0.3" y="2.2" width="10.4" height="7.5" rx="0.8" fill="#6cbcf2"/><rect x="3.5" y="4.5" width="4" height="3" rx="0.5" fill="none" stroke="#4a9fdc" stroke-width="0.6"/></svg>
<div class="t" style="left:39.1px;top:355.65px;font-size:11px;color:#1d1d1d;">Pictures</div>
<div class="t" style="left:140px;top:355.65px;font-size:11px;color:#1d1d1d;width:93px;text-align:right">DIR</div>
<div class="t" style="left:246.2px;top:355.65px;font-size:11px;color:#1d1d1d;">06.08.2024, 15:32</div>
<svg class="a" style="left:21.3px;top:371.9px" width="11" height="10" viewBox="0 0 11 10"><path d="M0.3 1.2 Q0.3 0.3 1.2 0.3 L4 0.3 L5 1.2 L9.9 1.2 Q10.7 1.2 10.7 2 L10.7 3 L0.3 3 Z" fill="#4aa3e4"/><rect x="0.3" y="2.2" width="10.4" height="7.5" rx="0.8" fill="#6cbcf2"/><rect x="3.5" y="4.5" width="4" height="3" rx="0.5" fill="none" stroke="#4a9fdc" stroke-width="0.6"/></svg>
<div class="t" style="left:39.1px;top:370.9px;font-size:11px;color:#1d1d1d;">Public</div>
<div class="t" style="left:140px;top:370.9px;font-size:11px;color:#1d1d1d;width:93px;text-align:right">DIR</div>
<div class="t" style="left:246.2px;top:370.9px;font-size:11px;color:#1d1d1d;">12.10.2023, 09:14</div>
<svg class="a" style="left:21.3px;top:387.15px" width="11" height="10" viewBox="0 0 11 10"><path d="M0.3 1.2 Q0.3 0.3 1.2 0.3 L4 0.3 L5 1.2 L9.9 1.2 Q10.7 1.2 10.7 2 L10.7 3 L0.3 3 Z" fill="#4aa3e4"/><rect x="0.3" y="2.2" width="10.4" height="7.5" rx="0.8" fill="#6cbcf2"/><rect x="3.5" y="4.5" width="4" height="3" rx="0.5" fill="none" stroke="#4a9fdc" stroke-width="0.6"/></svg>
<div class="t" style="left:39.1px;top:386.15px;font-size:11px;color:#1d1d1d;">Sites</div>
<div class="t" style="left:140px;top:386.15px;font-size:11px;color:#1d1d1d;width:93px;text-align:right">DIR</div>
<div class="t" style="left:246.2px;top:386.15px;font-size:11px;color:#1d1d1d;">21.03.2024, 17:08</div>
<svg class="a" style="left:21.5px;top:401.4px" width="10" height="12" viewBox="0 0 10 12"><path d="M1 0.5 L6.5 0.5 L9.3 3.3 L9.3 11.5 L1 11.5 Z" fill="#fbfbfb" stroke="#ececec" stroke-width="0.7"/></svg>
<div class="t" style="left:39.1px;top:401.4px;font-size:11px;color:#8f8f8f;">.bash_history</div>
<div class="t" style="left:140px;top:401.4px;font-size:11px;color:#8f8f8f;width:93px;text-align:right">211 byt...</div>
<div class="t" style="left:246.2px;top:401.4px;font-size:11px;color:#8f8f8f;">16.05.2024, 12:19</div>
<div class="t" style="left:362.7px;top:401.4px;font-size:11px;color:#8f8f8f;">data</div>
<svg class="a" style="left:21.5px;top:416.65px" width="10" height="12" viewBox="0 0 10 12"><path d="M1 0.5 L6.5 0.5 L9.3 3.3 L9.3 11.5 L1 11.5 Z" fill="#fbfbfb" stroke="#ececec" stroke-width="0.7"/></svg>
<div class="t" style="left:39.1px;top:416.65px;font-size:11px;color:#8f8f8f;">.CFUser...Encoding</div>
<div class="t" style="left:140px;top:416.65px;font-size:11px;color:#8f8f8f;width:93px;text-align:right">7 bytes</div>
<div class="t" style="left:246.2px;top:416.65px;font-size:11px;color:#8f8f8f;">03.10.2023, 17:41</div>
<div class="t" style="left:362.7px;top:416.65px;font-size:11px;color:#8f8f8f;">data</div>
<svg class="a" style="left:21.5px;top:431.9px" width="10" height="12" viewBox="0 0 10 12"><path d="M1 0.5 L6.5 0.5 L9.3 3.3 L9.3 11.5 L1 11.5 Z" fill="#fbfbfb" stroke="#ececec" stroke-width="0.7"/></svg>
<div class="t" style="left:39.1px;top:431.9px;font-size:11px;color:#8f8f8f;">.DS_Store</div>
<div class="t" style="left:140px;top:431.9px;font-size:11px;color:#8f8f8f;width:93px;text-align:right">14 KB</div>
<div class="t" style="left:246.2px;top:431.9px;font-size:11px;color:#8f8f8f;">21.05.2024, 13:42</div>
<div class="a" style="left:448.1px;top:135.4px;width:46.8px;height:12.2px;background:linear-gradient(#d9d9db,#c9c9cc);border-radius:3px"></div>
<div class="a" style="left:441px;top:135.5px;width:1px;height:11.5px;background:#c9c9c9;"></div>
<div class="t" style="left:456px;top:135.6px;font-size:9.5px;color:#f2f2f2;font-weight:bold;">name</div>
<svg class="a" style="left:483.5px;top:139.5px" width="6" height="5" viewBox="0 0 6 5"><path d="M0.3 4.6 L3 0.4 L5.7 4.6 Z" fill="#333"/></svg>
<div class="t" style="left:507px;top:135.6px;font-size:9.5px;color:#6d6d6d;font-weight:bold;">extension</div>
<div class="t" style="left:575.3px;top:135.6px;font-size:9.5px;color:#6d6d6d;font-weight:bold;">size</div>
<div class="t" style="left:617px;top:135.6px;font-size:9.5px;color:#6d6d6d;font-weight:bold;">modified</div>
<div class="t" style="left:680.8px;top:135.6px;font-size:9.5px;color:#6d6d6d;font-weight:bold;">created</div>
<div class="t" style="left:739.6px;top:135.6px;font-size:9.5px;color:#6d6d6d;font-weight:bold;">added</div>
<div class="t" style="left:791.6px;top:135.6px;font-size:9.5px;color:#6d6d6d;font-weight:bold;">opened</div>
<div class="t" style="left:848.9px;top:135.6px;font-size:9.5px;color:#6d6d6d;font-weight:bold;">kind</div>
<div class="a" style="left:626.3px;top:157px;width:72.5px;height:72.6px;background:#0b4fd5;border-radius:9px"></div>
<div class="a" style="left:639.9px;top:164.9px;width:45.6px;height:55.9px;background:#fff;box-shadow:0 1px 2px rgba(0,0,0,0.22),0 0 0.5px rgba(0,0,0,0.2);padding:2.5px"><svg width="100%" height="100%" viewBox="0 0 100 100" preserveAspectRatio="none" style="display:block"><defs><linearGradient id="s1" x1="0" y1="0" x2="0" y2="1"><stop offset="0" stop-color="#d9887a"/><stop offset="0.12" stop-color="#f2aa9c"/><stop offset="0.2" stop-color="#dc9a90"/><stop offset="0.24" stop-color="#6d5e66"/><stop offset="0.3" stop-color="#a8879a"/><stop offset="0.7" stop-color="#7d6a82"/><stop offset="1" stop-color="#5c5468"/></linearGradient>
<linearGradient id="w1" x1="0" y1="0" x2="0" y2="1"><stop offset="0" stop-color="#4a5566"/><stop offset="1" stop-color="#2f3a48"/></linearGradient></defs>
<rect width="100" height="100" fill="url(#s1)"/>
<path d="M60 10 Q75 7 100 11 L100 14 Q80 13 60 13 Z" fill="#a77f86" opacity="0.8"/>
<path d="M0 22 L40 20 L60 23 L100 22 L100 27 L0 26 Z" fill="#5a505a" opacity="0.9"/>
<path d="M40 45 Q60 36 100 33 L100 62 Q80 56 62 52 Q50 50 40 45 Z" fill="#3c3a30"/>
<path d="M62 52 Q80 56 100 62 L100 100 L35 100 Z" fill="url(#w1)"/>
<path d="M0 86 L100 30 L100 36 L0 97 Z" fill="#9a97a0"/>
<path d="M0 97 L100 36 L100 44 L25 100 L0 100 Z" fill="#2a2d33"/>
<circle cx="20" cy="80" r="1" fill="#e66"/><circle cx="35" cy="70" r="1" fill="#fd8"/><circle cx="55" cy="58" r="0.9" fill="#fff"/></svg></div>
<div class="t" style="left:623px;top:233.5px;font-size:11.6px;color:#1c1c1c;width:80px;text-align:center">photo-001.jpeg</div>
<div class="a" style="left:773.0px;top:174.0px;width:55.9px;height:38.2px;background:#fff;box-shadow:0 1px 2px rgba(0,0,0,0.22),0 0 0.5px rgba(0,0,0,0.2);padding:2.5px"><svg width="100%" height="100%" viewBox="0 0 100 100" preserveAspectRatio="none" style="display:block"><defs><linearGradient id="s2" x1="0" y1="0" x2="0" y2="1"><stop offset="0" stop-color="#7681bf"/><stop offset="0.3" stop-color="#a68aae"/><stop offset="0.5" stop-color="#e0907a"/><stop offset="0.56" stop-color="#f08a5c"/><stop offset="0.6" stop-color="#2f3038"/><stop offset="1" stop-color="#13222b"/></linearGradient></defs>
<rect width="100" height="100" fill="url(#s2)"/>
<rect x="9" y="0" width="5" height="60" fill="#3b2622"/><rect x="25" y="0" width="4" height="60" fill="#3b2622"/><rect x="9" y="3" width="20" height="6" fill="#3b2622"/><rect x="12" y="25" width="14" height="3" fill="#3b2622"/>
<path d="M28 0 L62 60 M33 0 L68 60" stroke="#2a2428" stroke-width="1.2"/>
<rect x="66" y="38" width="2" height="24" fill="#3b2622"/>
<path d="M35 55 L42 30 L46 32 L40 56 Z" fill="#2a2a2a"/>
<path d="M0 62 Q50 57 100 64 L100 100 L0 100 Z" fill="#1c2e38"/>
<path d="M45 70 Q70 62 100 70 L100 82 Q70 76 45 84 Z" fill="#3d5b70" opacity="0.75"/>
<path d="M0 75 Q30 70 55 80 L50 100 L0 100 Z" fill="#14232a"/></svg></div>
<div class="a" style="left:750.3px;top:231.6px;width:100.5px;height:12.9px;background:#e7eefc;border:1px solid #c3d1ee;border-radius:3.5px"></div>
<div class="t" style="left:750.3px;top:232.20000000000002px;font-size:11.6px;color:#2660d4;width:100.5px;text-align:center;-webkit-text-stroke:0.2px #2660d4">photo-002.jpeg</div>
<div class="a" style="left:643.2px;top:274.5px;width:39.0px;height:55.2px;background:#fff;box-shadow:0 1px 2px rgba(0,0,0,0.22),0 0 0.5px rgba(0,0,0,0.2);padding:2.5px"><svg width="100%" height="100%" viewBox="0 0 100 100" preserveAspectRatio="none" style="display:block"><defs><linearGradient id="s4" x1="0" y1="0" x2="0" y2="1"><stop offset="0" stop-color="#e9c8a6"/><stop offset="0.5" stop-color="#e2bf9f"/><stop offset="0.72" stop-color="#d2b59c"/><stop offset="1" stop-color="#b39b80"/></linearGradient></defs>
<rect width="100" height="100" fill="url(#s4)"/>
<g fill="#2a241e"><path d="M0 0 L62 0 Q48 4 38 8 Q30 10 22 8 Z"/><path d="M10 4 Q30 12 40 30 Q28 20 12 14 Z"/><path d="M18 6 Q24 22 22 44 Q14 28 8 14 Z"/><path d="M4 8 Q8 20 4 36 Q0 26 0 20 Z"/><path d="M30 2 Q50 6 58 18 Q44 12 30 10 Z"/><path d="M20 4 Q36 14 30 30 Q26 18 16 10 Z"/></g>
<path d="M0 60 Q6 56 12 58 Q20 62 30 68 L48 74 L0 78 Z" fill="#3a342e"/>
<path d="M40 74 L100 73 L100 76 L40 77 Z" fill="#6f6558" opacity="0.7"/>
<path d="M0 78 Q50 76 100 79 L100 100 L0 100 Z" fill="#b09a7e"/>
<path d="M0 88 Q40 84 100 90 L100 100 L0 100 Z" fill="#9c8670" opacity="0.7"/></svg></div>
<div class="a" style="left:612.3px;top:340.3px;width:100.4px;height:12.8px;background:#e7eefc;border:1px solid #c3d1ee;border-radius:3.5px"></div>
<div class="t" style="left:612.3px;top:340.90000000000003px;font-size:11.6px;color:#2660d4;width:100.4px;text-align:center;-webkit-text-stroke:0.2px #2660d4">photo-004.jpeg</div>
<div class="a" style="left:783.8px;top:274.5px;width:33.2px;height:55.2px;background:#fff;box-shadow:0 1px 2px rgba(0,0,0,0.22),0 0 0.5px rgba(0,0,0,0.2);padding:2.5px"><svg width="100%" height="100%" viewBox="0 0 100 100" preserveAspectRatio="none" style="display:block"><defs><linearGradient id="s5" x1="0" y1="0" x2="1" y2="1"><stop offset="0" stop-color="#1d5a8c"/><stop offset="0.5" stop-color="#2e80b8"/><stop offset="0.8" stop-color="#5aa8d8"/><stop offset="1" stop-color="#a8d2e6"/></linearGradient></defs>
<rect width="100" height="100" fill="url(#s5)"/>
<path d="M75 20 Q85 30 100 28 L100 45 Q80 40 70 30 Z" fill="#6ab0de" opacity="0.5"/>
<rect x="26" y="18" width="10" height="80" fill="#d4ccc0"/>
<path d="M31 20 L100 72 M31 25 L100 80" stroke="#d8d2c8" stroke-width="0.8" opacity="0.7"/>
<path d="M0 50 L100 82 L100 88 L0 60 Z" fill="#34383c"/>
<rect x="0" y="84" width="100" height="16" fill="#6d9dbc"/>
<rect x="26" y="84" width="10" height="16" fill="#a9b8c0" opacity="0.6"/></svg></div>
<div class="a" style="left:750.2px;top:340.3px;width:100.4px;height:12.8px;background:#e7eefc;border:1px solid #c3d1ee;border-radius:3.5px"></div>
<div class="t" style="left:750.2px;top:340.90000000000003px;font-size:11.6px;color:#2660d4;width:100.4px;text-align:center;-webkit-text-stroke:0.2px #2660d4">photo-005.jpeg</div>
<div class="a" style="left:507.8px;top:382.0px;width:32.8px;height:55.6px;background:#fff;box-shadow:0 1px 2px rgba(0,0,0,0.22),0 0 0.5px rgba(0,0,0,0.2);padding:2.5px"><svg width="100%" height="100%" viewBox="0 0 100 100" preserveAspectRatio="none" style="display:block"><defs><linearGradient id="s6" x1="0" y1="0" x2="1" y2="1"><stop offset="0" stop-color="#5a74b4"/><stop offset="0.6" stop-color="#7d86c2"/><stop offset="1" stop-color="#6278b6"/></linearGradient></defs><rect width="100" height="100" fill="url(#s6)"/><ellipse cx="88" cy="74" rx="40" ry="6" fill="#13284a"/></svg></div>
<div class="a" style="left:474.0px;top:448.5px;width:100.6px;height:13.0px;background:#e7eefc;border:1px solid #c3d1ee;border-radius:3.5px"></div>
<div class="t" style="left:474px;top:449.1px;font-size:11.6px;color:#2660d4;width:100.6px;text-align:center;-webkit-text-stroke:0.2px #2660d4">photo-006.jpeg</div>
<div class="a" style="left:644.0px;top:383.0px;width:36.5px;height:55.2px;background:#fff;box-shadow:0 1px 2px rgba(0,0,0,0.22),0 0 0.5px rgba(0,0,0,0.2);padding:2.5px"><svg width="100%" height="100%" viewBox="0 0 100 100" preserveAspectRatio="none" style="display:block"><defs><filter id="b7" x="-20%" y="-20%" width="140%" height="140%"><feGaussianBlur stdDeviation="3"/></filter></defs>
<rect width="100" height="100" fill="#16222c"/>
<g filter="url(#b7)"><path d="M0 5 L30 0 L30 45 L0 50 Z" fill="#2f4a5e"/><path d="M68 10 L100 5 L100 50 L70 55 Z" fill="#35526a"/><path d="M0 55 L22 50 L18 100 L0 100 Z" fill="#22384a"/><path d="M72 55 L100 60 L100 100 L70 100 Z" fill="#1e3242"/>
<path d="M15 100 L50 8 L70 5 L42 100 Z" fill="#a05a2c"/><path d="M26 92 L56 14 L62 16 L34 95 Z" fill="#e89850"/></g>
<g fill="#f5c080" opacity="0.8"><circle cx="40" cy="60" r="2"/><circle cx="52" cy="30" r="1.6"/><circle cx="30" cy="85" r="1.8"/></g>
<g fill="#8ec0e0" opacity="0.5"><rect x="8" y="15" width="3" height="3"/><rect x="80" y="25" width="3" height="3"/><rect x="85" y="70" width="2" height="2"/></g></svg></div>
<div class="a" style="left:612.6px;top:448.5px;width:99.4px;height:13.0px;background:#e7eefc;border:1px solid #c3d1ee;border-radius:3.5px"></div>
<div class="t" style="left:612.6px;top:449.1px;font-size:11.6px;color:#2660d4;width:99.4px;text-align:center;-webkit-text-stroke:0.2px #2660d4">photo-007.jpeg</div>
<div class="a" style="left:772.4px;top:392.0px;width:56.0px;height:38.2px;background:#fff;box-shadow:0 1px 2px rgba(0,0,0,0.22),0 0 0.5px rgba(0,0,0,0.2);padding:2.5px"><svg width="100%" height="100%" viewBox="0 0 100 100" preserveAspectRatio="none" style="display:block"><defs><linearGradient id="s8" x1="0" y1="0" x2="0" y2="1"><stop offset="0" stop-color="#8cc0cc"/><stop offset="0.25" stop-color="#b9cfd0"/><stop offset="0.42" stop-color="#f0d6b4"/><stop offset="0.48" stop-color="#8cc8c0"/><stop offset="0.58" stop-color="#4ab8b0"/><stop offset="0.68" stop-color="#cfe4dc"/><stop offset="0.75" stop-color="#efd2b8"/><stop offset="1" stop-color="#dcb496"/></linearGradient>
<radialGradient id="sun8" cx="0.5" cy="0.5" r="0.5"><stop offset="0" stop-color="#fff6e0"/><stop offset="1" stop-color="#fff0d0" stop-opacity="0"/></radialGradient></defs>
<rect width="100" height="100" fill="url(#s8)"/>
<path d="M0 45 L0 100 L30 100 Q20 70 45 48 Z" fill="#e8c8a8" opacity="0.85"/>
<ellipse cx="32" cy="42" rx="20" ry="14" fill="url(#sun8)"/>
<path d="M0 5 Q10 0 18 8 Q8 12 0 14 Z" fill="#c79a7a" opacity="0.6"/>
<path d="M85 5 Q95 0 100 4 L100 10 Q92 8 85 5 Z" fill="#6b8f98" opacity="0.6"/></svg></div>
<div class="a" style="left:750.4px;top:448.5px;width:100.2px;height:13.0px;background:#e7eefc;border:1px solid #c3d1ee;border-radius:3.5px"></div>
<div class="t" style="left:750.4px;top:449.1px;font-size:11.6px;color:#2660d4;width:100.2px;text-align:center;-webkit-text-stroke:0.2px #2660d4">photo-008.jpeg</div>
<div class="a" style="left:474.0px;top:340.3px;width:100.6px;height:12.8px;background:#e7eefc;border:1px solid #c3d1ee;border-radius:3.5px"></div>
<div class="t" style="left:474px;top:340.90000000000003px;font-size:11.6px;color:#2660d4;width:100.6px;text-align:center;-webkit-text-stroke:0.2px #2660d4">photo-003.jpeg</div>
<div class="t" style="left:0px;top:472.3px;font-size:10.5px;color:#2e2e2e;width:442px;text-align:center">0 bytes / 15 KB in 0 / 3 file(s). 0 / 15 dir(s)</div>
<div class="t" style="left:443px;top:472.3px;font-size:10.5px;color:#2e2e2e;width:442px;text-align:center">55,5 MB / 57,4 MB in 13 / 14 file(s). 0 / 0 dir(s)</div>
<div class="a" style="left:442px;top:469px;width:1px;height:16px;background:#e3e3e3;"></div>
<div class="t" style="left:121.69999999999999px;top:495.29999999999995px;font-size:12.2px;color:#262626;">/Users/Nadine/Desktop/Pictures</div>
<div class="a" style="left:305px;top:491px;width:570px;height:18.5px;background:#fff;border-radius:5px;box-shadow:0 0 0 0.5px #d8d8d8"></div>
<div class="a" style="left:859px;top:493px;width:14px;height:14.5px;background:linear-gradient(#2f8cff,#1170f0);border-radius:3.5px"></div>
<svg class="a" style="left:862px;top:497.5px" width="8" height="6" viewBox="0 0 8 6"><path d="M1 1.2 L4 4.4 L7 1.2" fill="none" stroke="#fff" stroke-width="1.4"/></svg>
<div class="t" style="left:0px;top:521.3px;font-size:12.2px;color:#2a2a2a;width:147px;text-align:center">View - F3</div>
<div class="t" style="left:147px;top:521.3px;font-size:12.2px;color:#2a2a2a;width:148px;text-align:center">Edit - F4</div>
<div class="a" style="left:146.5px;top:513px;width:1px;height:26px;background:#d3d3d3;"></div>
<div class="t" style="left:295px;top:521.3px;font-size:12.2px;color:#2a2a2a;width:147.5px;text-align:center">Copy - F5</div>
<div class="a" style="left:294.5px;top:513px;width:1px;height:26px;background:#d3d3d3;"></div>
<div class="t" style="left:442.5px;top:521.3px;font-size:12.2px;color:#2a2a2a;width:147.5px;text-align:center">Move - F6</div>
<div class="a" style="left:442.0px;top:513px;width:1px;height:26px;background:#d3d3d3;"></div>
<div class="t" style="left:590px;top:521.3px;font-size:12.2px;color:#2a2a2a;width:147.5px;text-align:center">New Folder - F7</div>
<div class="a" style="left:589.5px;top:513px;width:1px;height:26px;background:#d3d3d3;"></div>
<div class="t" style="left:737.5px;top:521.3px;font-size:12.2px;color:#2a2a2a;width:147.5px;text-align:center">Delete - F8</div>
<div class="a" style="left:737.0px;top:513px;width:1px;height:26px;background:#d3d3d3;"></div>
<div class="a" style="left:273.00px;top:151.30px;width:300.30px;height:269.50px;background:#f5f5f5;border-radius:8.5px;box-shadow:0 0 0 0.5px rgba(0,0,0,0.16),0 10px 30px rgba(35,45,90,0.36),0 2px 8px rgba(35,45,90,0.16);overflow:hidden"></div>
<div class="a" style="left:273.00px;top:151.30px;width:300.30px;height:22.20px;background:#fafafa;border-radius:9px 9px 0 0"></div>
<div class="a" style="left:273.00px;top:173.50px;width:300.30px;height:0.80px;background:#e6e6e6;"></div>
<div class="a" style="left:278.60px;top:156.80px;width:10.40px;height:10.40px;background:#fe5f57;border-radius:50%"></div>
<div class="a" style="left:295.40px;top:156.80px;width:10.40px;height:10.40px;background:#dcdcdc;border-radius:50%"></div>
<div class="a" style="left:312.00px;top:156.80px;width:10.40px;height:10.40px;background:#dcdcdc;border-radius:50%"></div>
<div class="t" style="left:273.00px;top:156.69px;font-size:11px;color:#4a4a4a;font-weight:bold;width:300px;text-align:center">Compress files</div>
<div class="t" style="left:293.30px;top:191.29px;font-size:11px;color:#333;">Compress 16 item(s):</div>
<div class="a" style="left:292.40px;top:209.70px;width:183.30px;height:16.50px;background:#fff;box-shadow:0 0.5px 0 #cfcfcf, 0 0 0 0.3px #e0e0e0"></div>
<div class="t" style="left:294.70px;top:214.03px;font-size:11.3px;color:#1f1f1f;">/Users/Nadine/Pictures.zip</div>
<div class="a" style="left:483.80px;top:209.20px;width:78.20px;height:16.00px;background:#fff;border-radius:4.5px;box-shadow:0 0 0 0.5px #d4d4d4,0 0.5px 1.5px rgba(0,0,0,0.15)"></div>
<div class="t" style="left:491.00px;top:211.49px;font-size:11px;color:#262626;">zip</div>
<div class="a" style="left:547.00px;top:211.00px;width:13.20px;height:11.80px;background:linear-gradient(#2f8cff,#1170f0);border-radius:3.5px"></div>
<svg class="a" style="left:549.60px;top:212.00px" width="8" height="10" viewBox="0 0 8 10"><path d="M1.3 3.7 L4 1.2 L6.7 3.7 M1.3 6.3 L4 8.8 L6.7 6.3" fill="none" stroke="#fff" stroke-width="1.2"/></svg>
<div class="t" style="left:290.20px;top:241.32px;font-size:11.2px;color:#333;">Internal compression</div>
<div class="a" style="left:291.00px;top:268.20px;width:264.50px;height:2.60px;background:#e3e3e3;border-radius:1.5px"></div>
<div class="a" style="left:290.70px;top:266.50px;width:1.00px;height:6.50px;background:#b0b0b0;"></div>
<div class="a" style="left:357.90px;top:266.50px;width:1.00px;height:6.50px;background:#b0b0b0;"></div>
<div class="a" style="left:487.10px;top:266.50px;width:1.00px;height:6.50px;background:#b0b0b0;"></div>
<div class="a" style="left:554.50px;top:266.50px;width:1.00px;height:6.50px;background:#b0b0b0;"></div>
<div class="a" style="left:419.60px;top:261.50px;width:6.80px;height:15.50px;background:#fff;border-radius:3.5px;box-shadow:0 0 0 0.3px rgba(0,0,0,0.12),0 0.5px 2px rgba(0,0,0,0.28)"></div>
<div class="t" style="left:286.30px;top:289.74px;font-size:8.7px;color:#333;">None</div>
<div class="t" style="left:346.40px;top:289.74px;font-size:8.7px;color:#333;">Fastest</div>
<div class="t" style="left:408.40px;top:289.74px;font-size:8.7px;color:#333;">Normal</div>
<div class="t" style="left:475.50px;top:289.74px;font-size:8.7px;color:#333;">Slow</div>
<div class="t" style="left:548.00px;top:289.74px;font-size:8.7px;color:#333;">Max</div>
<div class="a" style="left:288.80px;top:312.80px;width:268.20px;height:0.80px;background:#dcdcdc;"></div>
<div class="a" style="left:289.00px;top:330.00px;width:12.00px;height:12.00px;background:linear-gradient(#2f8cff,#1577f5);border-radius:3px"></div>
<svg class="a" style="left:289.00px;top:330.00px" width="12" height="12" viewBox="0 0 12 12"><path d="M2.8 6.2 L5 8.6 L9.2 3.2" fill="none" stroke="#fff" stroke-width="1.6" stroke-linecap="round" stroke-linejoin="round"/></svg>
<div class="t" style="left:305.70px;top:331.32px;font-size:11.2px;color:#333;">Encoding</div>
<div class="a" style="left:289.70px;top:352.50px;width:125.40px;height:16.90px;background:#fff;box-shadow:0 0.5px 0 #cfcfcf, 0 0 0 0.3px #e0e0e0"></div>
<div class="a" style="left:429.20px;top:350.30px;width:129.10px;height:20.50px;background:#fff;border-radius:3px;box-shadow:inset 0 0 0 2.5px #8db8f2"></div>
<svg class="a" style="left:293.00px;top:358.50px" width="62" height="6" viewBox="0 0 62 6"><circle cx="2.60" cy="3" r="2.45" fill="#1d1d1d"/><circle cx="9.28" cy="3" r="2.45" fill="#1d1d1d"/><circle cx="15.96" cy="3" r="2.45" fill="#1d1d1d"/><circle cx="22.64" cy="3" r="2.45" fill="#1d1d1d"/><circle cx="29.32" cy="3" r="2.45" fill="#1d1d1d"/><circle cx="36.00" cy="3" r="2.45" fill="#1d1d1d"/><circle cx="42.68" cy="3" r="2.45" fill="#1d1d1d"/><circle cx="49.36" cy="3" r="2.45" fill="#1d1d1d"/><circle cx="56.04" cy="3" r="2.45" fill="#1d1d1d"/></svg>
<svg class="a" style="left:432.80px;top:358.50px" width="62" height="6" viewBox="0 0 62 6"><circle cx="2.60" cy="3" r="2.45" fill="#1d1d1d"/><circle cx="9.28" cy="3" r="2.45" fill="#1d1d1d"/><circle cx="15.96" cy="3" r="2.45" fill="#1d1d1d"/><circle cx="22.64" cy="3" r="2.45" fill="#1d1d1d"/><circle cx="29.32" cy="3" r="2.45" fill="#1d1d1d"/><circle cx="36.00" cy="3" r="2.45" fill="#1d1d1d"/><circle cx="42.68" cy="3" r="2.45" fill="#1d1d1d"/><circle cx="49.36" cy="3" r="2.45" fill="#1d1d1d"/><circle cx="56.04" cy="3" r="2.45" fill="#1d1d1d"/></svg>
<div class="a" style="left:273.00px;top:380.80px;width:300.30px;height:0.80px;background:#e1e1e1;"></div>
<div class="a" style="left:408.40px;top:392.40px;width:66.60px;height:16.80px;background:#fff;border-radius:5px;box-shadow:0 0 0 0.5px rgba(0,0,0,0.12),0 0.5px 1.5px rgba(0,0,0,0.22)"></div>
<div class="t" style="left:408.40px;top:394.89px;font-size:11px;color:#262626;width:66.6px;text-align:center">Cancel</div>
<div class="a" style="left:486.20px;top:392.40px;width:70.10px;height:16.80px;background:linear-gradient(#1f8bff,#0a74f5);border-radius:5px;box-shadow:0 0.5px 1px rgba(0,0,0,0.2)"></div>
<div class="t" style="left:486.20px;top:395.06px;font-size:10.8px;color:#fff;width:70.1px;text-align:center">OK</div>
<div class="a" style="left:0;top:0;width:885px;height:540px;border-radius:10px;box-shadow:inset 0 0 0 1px rgba(255,255,255,0.45);pointer-events:none"></div>
</div>

</body></html>
